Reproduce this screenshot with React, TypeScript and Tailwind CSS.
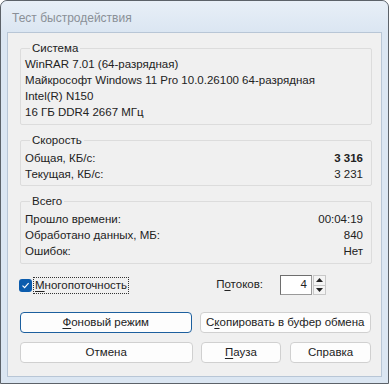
import React from "react";

const font = { fontFamily: '"Liberation Sans", Arial, sans-serif' };

function Group({ title, children, mt }: { title: string; children: React.ReactNode; mt: string }) {
  return (
    <fieldset className="border border-[#dcdcdc] rounded-[2px] pl-[4px] pr-[8px]">
      <legend className="ml-[5px] px-[2px] leading-[14px]">{title}</legend>
      <div className={mt}>{children}</div>
    </fieldset>
  );
}

function Row({ label, value, bold }: { label: string; value?: string; bold?: boolean }) {
  return (
    <div className="flex justify-between leading-[16px] h-[16px]">
      <span>{label}</span>
      {value !== undefined && <span className={bold ? "font-bold" : ""}>{value}</span>}
    </div>
  );
}

function Btn({ children, focused, className }: { children: React.ReactNode; focused?: boolean; className?: string }) {
  return (
    <div
      className={
        "h-[21px] flex items-center justify-center rounded-[4px] bg-[#fdfdfd] " +
        (focused ? "border border-[#1c5f9e]" : "border border-[#d0d0d0]") +
        " " +
        (className ?? "")
      }
    >
      {children}
    </div>
  );
}

export default function App() {
  return (
    <div className="w-[389px] h-[384px] bg-white" style={font}>
      <div className="w-[389px] h-[384px] border border-[#5c6269] rounded-t-[7px] bg-[#dbe6f2] flex flex-col text-[11.5px] text-[#222]">
        <div className="h-[31px] flex items-center pl-[11px] pt-[2px] text-[12px] text-[#8a9097] bg-gradient-to-b from-[#e8eff7] to-[#dbe6f2] rounded-t-[7px]">
          Тест быстродействия
        </div>
        <div className="flex-1 mx-[6px] mb-[6px] border border-[#b8c6d6] bg-[#f0f0f0] flex flex-col pt-[8px] pl-[12px] pr-[9px]">
          <Group title="Система" mt="mt-[1px] pb-[4px]">
            <Row label="WinRAR 7.01 (64-разрядная)" />
            <Row label="Майкрософт Windows 11 Pro 10.0.26100 64-разрядная" />
            <Row label="Intel(R) N150" />
            <Row label="16 ГБ DDR4 2667 МГц" />
          </Group>
          <div className="mt-[8px]">
            <Group title="Скорость" mt="mt-[3px] pb-[3px]">
              <Row label="Общая, КБ/с:" value="3 316" bold />
              <Row label="Текущая, КБ/с:" value="3 231" />
            </Group>
          </div>
          <div className="mt-[8px]">
            <Group title="Всего" mt="mt-[3px] pb-[4px]">
              <Row label="Прошло времени:" value="00:04:19" />
              <Row label="Обработано данных, МБ:" value="840" />
              <Row label="Ошибок:" value="Нет" />
            </Group>
          </div>
          <div className="mt-[11px] h-[20px] flex items-center">
            <div className="ml-[-1px] w-[13px] h-[13px] rounded-[3px] bg-[#0b5cad] flex items-center justify-center">
              <svg width="9" height="9" viewBox="0 0 9 9">
                <path d="M1.5 4.6 L3.6 6.6 L7.6 2.2" stroke="white" strokeWidth="1.2" fill="none" />
              </svg>
            </div>
            <div className="ml-[1px] px-[1px] h-[17px] leading-[15px] border border-dotted border-[#333]">
              <span className="underline underline-offset-2">М</span>ногопоточность
            </div>
            <div className="ml-auto flex items-center">
              <span>
                П<span className="underline underline-offset-2">о</span>токов:
              </span>
              <div className="ml-[17px] w-[32px] h-[20px] bg-white border border-[#9a9a9a] border-t-[#6e6e6e] border-l-[#6e6e6e] flex items-center justify-end pr-[4px]">
                4
              </div>
              <div className="ml-[1px] w-[13px] h-[20px] flex flex-col border border-[#c8c8c8] bg-[#f4f4f4]">
                <div className="flex-1 flex items-center justify-center border-b border-[#c8c8c8]">
                  <svg width="7" height="4" viewBox="0 0 7 4"><path d="M0 4 L3.5 0 L7 4 Z" fill="#222" /></svg>
                </div>
                <div className="flex-1 flex items-center justify-center">
                  <svg width="7" height="4" viewBox="0 0 7 4"><path d="M0 0 L3.5 4 L7 0 Z" fill="#222" /></svg>
                </div>
              </div>
              <div className="w-[46px]" />
            </div>
          </div>
          <div className="mt-[17px] flex gap-[8px] pr-[1px]">
            <Btn focused className="flex-1">
              <span><span className="underline underline-offset-2">Ф</span>оновый режим</span>
            </Btn>
            <Btn className="flex-1">
              <span>С<span className="underline underline-offset-2">к</span>опировать в буфер обмена</span>
            </Btn>
          </div>
          <div className="mt-[9px] flex gap-[8px] pr-[1px]">
            <Btn className="flex-1">Отмена</Btn>
            <div className="flex-1 flex gap-[9px]">
              <Btn className="flex-1">
                <span><span className="underline underline-offset-2">П</span>ауза</span>
              </Btn>
              <Btn className="flex-1">Справка</Btn>
            </div>
          </div>
        </div>
      </div>
    </div>
  );
}
